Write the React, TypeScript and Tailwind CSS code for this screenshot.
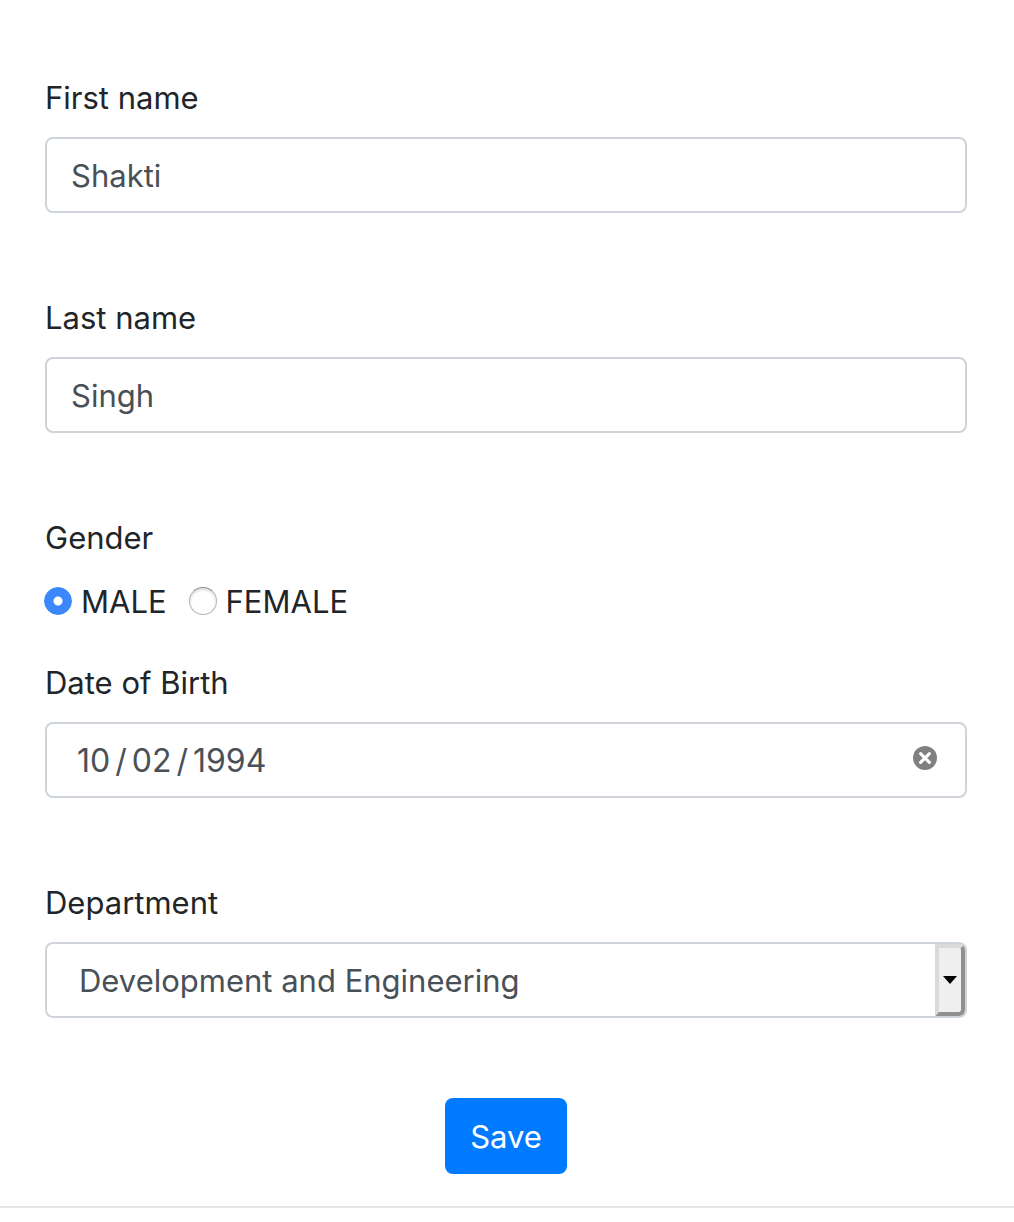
import { useRef, useState, type ReactNode } from 'react';

const controlClass =
  'block h-[76px] w-full rounded-lg border-2 border-[#ced4da] bg-white text-[#495057] outline-none focus:border-[#80bdff]';

const radioClass =
  'mt-2.5 size-7 shrink-0 appearance-none rounded-full border border-[#b4b4b4] border-t-[#8f8f8f] bg-white shadow-[inset_0_2px_3px_rgba(0,0,0,0.14)] checked:border-[#3b88fd] checked:bg-[radial-gradient(circle,#ffffff_4px,#3b88fd_5px)] checked:shadow-none';

function Field({ id, label, children }: { id: string; label: string; children: ReactNode }) {
  return (
    <div className="flex flex-col gap-3.5">
      <label htmlFor={id} className="self-start">
        {label}
      </label>
      {children}
    </div>
  );
}

function Radio({ value, checked, onChange }: { value: string; checked: boolean; onChange: () => void }) {
  return (
    <label className="flex items-start gap-[9px]">
      <input type="radio" name="gender" value={value} checked={checked} onChange={onChange} className={radioClass} />
      {value}
    </label>
  );
}

export default function App() {
  const [gender, setGender] = useState('MALE');
  const [birth, setBirth] = useState('1994-10-02');
  const birthRef = useRef<HTMLInputElement>(null);

  return (
    <main className="bg-white pt-[73px] font-['Inter',sans-serif] text-[31px] leading-[50px] text-[#212529]">
      <form
        className="border-b-2 border-[#e5e5e5] pr-[47px] pb-8 pl-[45px]"
        onSubmit={(event) => event.preventDefault()}
      >
        <div className="flex flex-col gap-20">
          <Field id="first-name" label="First name">
            <input id="first-name" type="text" defaultValue="Shakti" className={`${controlClass} px-6`} />
          </Field>
          <Field id="last-name" label="Last name">
            <input id="last-name" type="text" defaultValue="Singh" className={`${controlClass} px-6`} />
          </Field>

          <div className="flex flex-col gap-[31px]">
            <fieldset>
              <legend className="mb-3.5">Gender</legend>
              <div className="-ml-px flex gap-[22px]">
                <Radio value="MALE" checked={gender === 'MALE'} onChange={() => setGender('MALE')} />
                <Radio value="FEMALE" checked={gender === 'FEMALE'} onChange={() => setGender('FEMALE')} />
              </div>
            </fieldset>
            <Field id="birth" label="Date of Birth">
              <div className="relative">
                <input
                  ref={birthRef}
                  id="birth"
                  type="date"
                  value={birth}
                  onChange={(event) => setBirth(event.target.value)}
                  className={`${controlClass} px-[29px] pt-0.5 text-[32px] [&::-webkit-calendar-picker-indicator]:hidden [&::-webkit-datetime-edit-text]:px-1`}
                />
                <button
                  type="button"
                  aria-label="Clear date"
                  onClick={() => {
                    setBirth('');
                    birthRef.current?.focus();
                  }}
                  className="absolute top-6 right-[30px] size-6"
                >
                  <svg viewBox="0 0 24 24" className="size-6" aria-hidden="true">
                    <circle cx="12" cy="12" r="12" fill="#808080" />
                    <path d="M7.6 7.6l8.8 8.8M16.4 7.6l-8.8 8.8" stroke="#fff" strokeWidth="3" strokeLinecap="round" />
                  </svg>
                </button>
              </div>
            </Field>
          </div>

          <Field id="department" label="Department">
            <div className="relative">
              <select id="department" className={`${controlClass} appearance-none pt-0.5 pr-12 pl-8`}>
                <option>Development and Engineering</option>
              </select>
              <span className="pointer-events-none absolute inset-y-0.5 right-0.5 flex w-[30px] items-center justify-center rounded-r-md border-4 border-t-[#dadada] border-r-[#909090] border-b-[#909090] border-l-[#dadada] bg-[#efefef]">
                <svg viewBox="0 0 14 8" className="h-2 w-3.5 shrink-0" aria-hidden="true">
                  <path d="M0 0h14L7 8z" fill="#000" />
                </svg>
              </span>
            </div>
          </Field>

          <button type="submit" className="h-[76px] self-center rounded-lg bg-[#007bff] px-[25px] pt-0.5 text-white">
            Save
          </button>
        </div>
      </form>
    </main>
  );
}
